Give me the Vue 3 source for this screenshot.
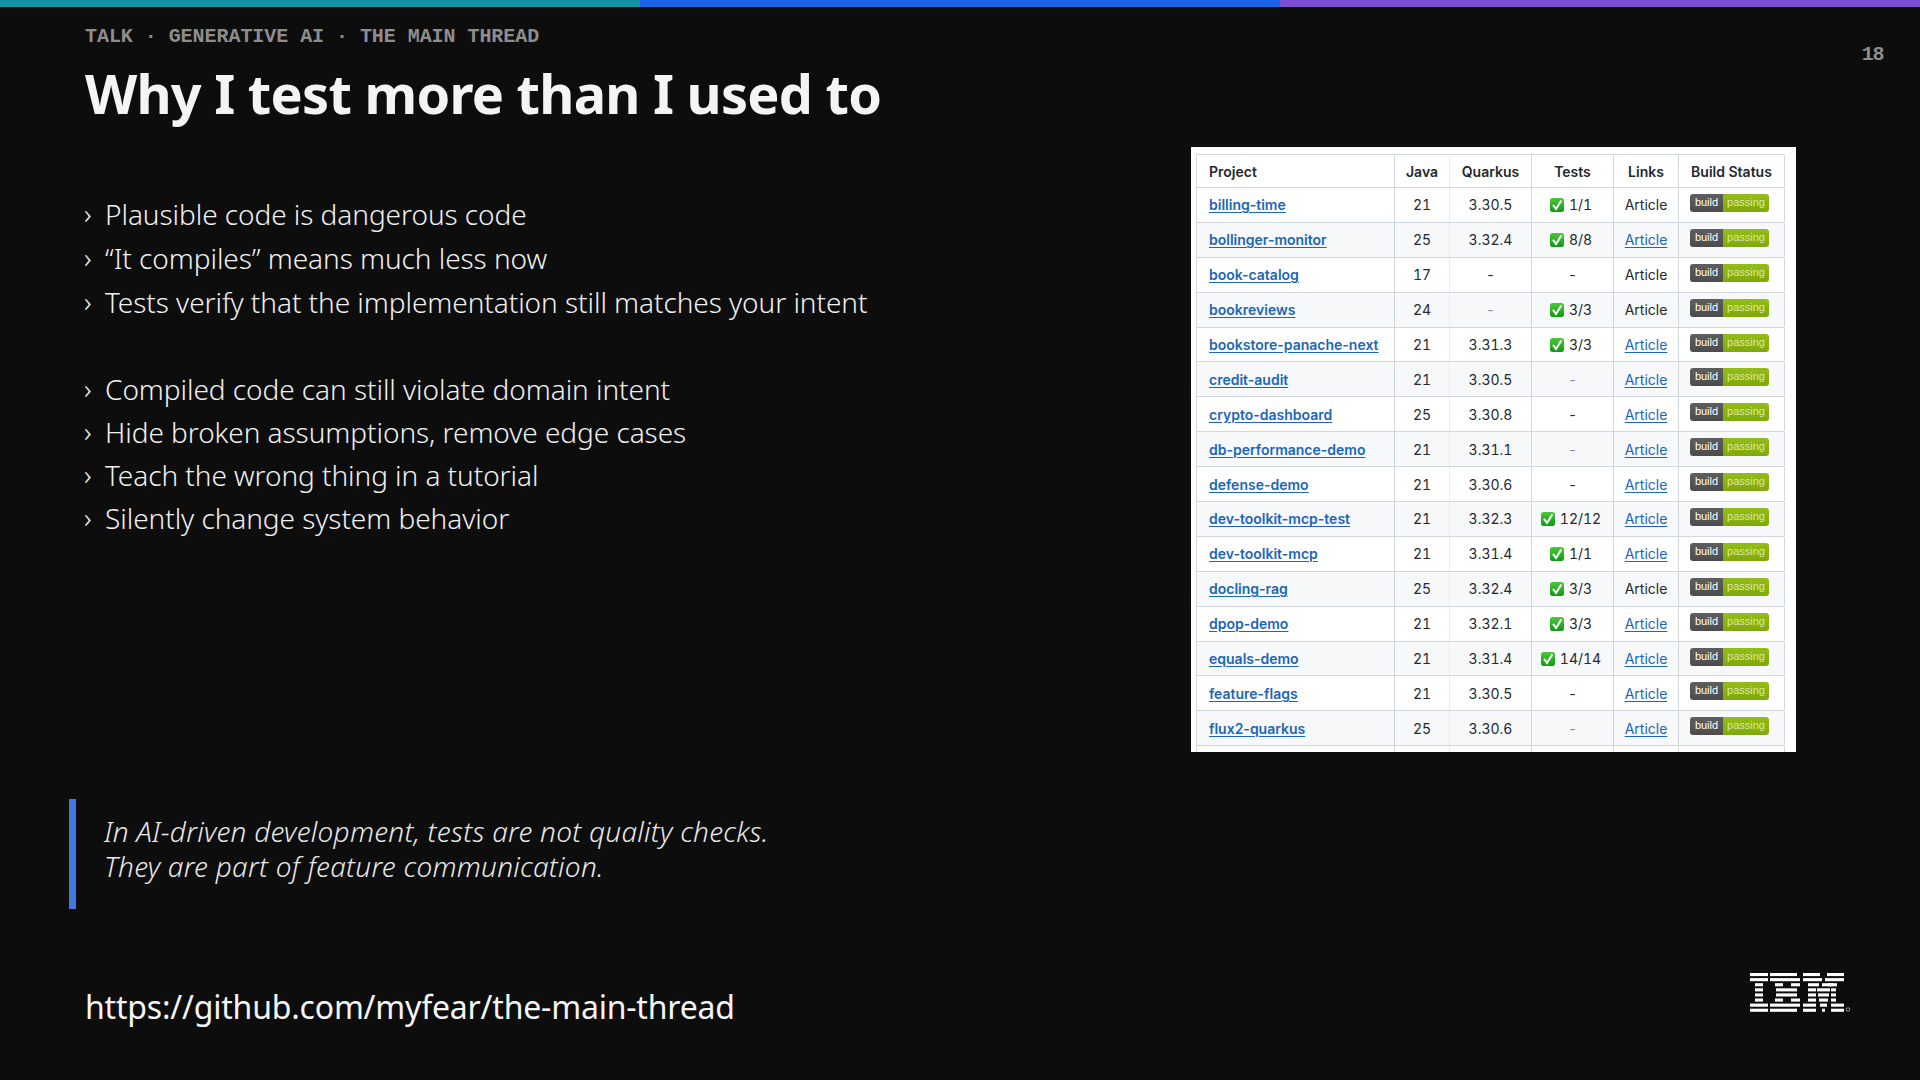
<script setup>
const rows = [
  ['billing-time', '21', '3.30.5', '1/1', false],
  ['bollinger-monitor', '25', '3.32.4', '8/8', true],
  ['book-catalog', '17', '-', '-', false],
  ['bookreviews', '24', '-', '3/3', false],
  ['bookstore-panache-next', '21', '3.31.3', '3/3', true],
  ['credit-audit', '21', '3.30.5', '-', true],
  ['crypto-dashboard', '25', '3.30.8', '-', true],
  ['db-performance-demo', '21', '3.31.1', '-', true],
  ['defense-demo', '21', '3.30.6', '-', true],
  ['dev-toolkit-mcp-test', '21', '3.32.3', '12/12', true],
  ['dev-toolkit-mcp', '21', '3.31.4', '1/1', true],
  ['docling-rag', '25', '3.32.4', '3/3', false],
  ['dpop-demo', '21', '3.32.1', '3/3', true],
  ['equals-demo', '21', '3.31.4', '14/14', true],
  ['feature-flags', '21', '3.30.5', '-', true],
  ['flux2-quarkus', '25', '3.30.6', '-', true]
]
const first = [
  'Plausible code is dangerous code',
  '“It compiles” means much less now',
  'Tests verify that the implementation still matches your intent'
]
const second = [
  'Compiled code can still violate domain intent',
  'Hide broken assumptions, remove edge cases',
  'Teach the wrong thing in a tutorial',
  'Silently change system behavior'
]
// IBM logo: each stripe is a list of [x, width] segments
const stripes = [
  [[0,18],[20,27],[53,17],[77,17]],
  [[0,18],[20,30],[53,19],[75,19]],
  [[5,8],[25,8],[41,9],[58,11],[72,11],[78,9]],
  [[5,8],[26,21],[58,8],[67,13],[81,5]],
  [[5,8],[26,21],[58,8],[68,11],[81,5]],
  [[5,8],[25,8],[41,9],[58,8],[69,9],[81,5]],
  [[0,18],[20,30],[53,13],[70,7],[81,13]],
  [[0,18],[20,27],[53,13],[72,3],[81,13]]
]
</script>

<template>
  <div class="slide">
    <div class="bar"><i class="teal"></i><i class="blue"></i><i class="violet"></i></div>
    <header class="head">
      <div>
        <div class="eyebrow">TALK · GENERATIVE AI · THE MAIN THREAD</div>
        <h1>Why I test more than I used to</h1>
      </div>
      <div class="page">18</div>
    </header>
    <main class="main">
      <div class="left">
        <ul class="list one">
          <li v-for="t in first" :key="t">{{ t }}</li>
        </ul>
        <ul class="list two">
          <li v-for="t in second" :key="t">{{ t }}</li>
        </ul>
      </div>
      <div class="card">
        <div class="tbl">
          <div class="row hd">
            <div class="c p">Project</div><div class="c j">Java</div><div class="c q">Quarkus</div>
            <div class="c t">Tests</div><div class="c l">Links</div><div class="c b">Build Status</div>
          </div>
          <div v-for="r in rows" :key="r[0]" class="row">
            <div class="c p"><a>{{ r[0] }}</a></div>
            <div class="c j num">{{ r[1] }}</div>
            <div class="c q num"><span :class="{ dash: r[2] === '-' }">{{ r[2] }}</span></div>
            <div class="c t num" :class="{ pass: r[3] !== '-' }">
              <svg v-if="r[3] !== '-'" class="check" viewBox="0 0 14 14">
                <defs>
                  <linearGradient id="g" x1="0" y1="0" x2="0" y2="1">
                    <stop offset="0" stop-color="#4cc83a"/><stop offset="1" stop-color="#0f9a12"/>
                  </linearGradient>
                </defs>
                <rect width="14" height="14" rx="2.8" fill="url(#g)"/>
                <path d="M3 6.8 6 11 11.4 2.4" fill="none" stroke="#fff" stroke-width="2"/>
              </svg>
              <span :class="{ dash: r[3] === '-' }">{{ r[3] }}</span>
            </div>
            <div class="c l"><a v-if="r[4]" class="plain">Article</a><template v-else>Article</template></div>
            <div class="c b"><span class="badge"><span class="bk">build</span><span class="bv">passing</span></span></div>
          </div>
          <div class="row"><div class="c p"></div><div class="c j"></div><div class="c q"></div><div class="c t"></div><div class="c l"></div><div class="c b"></div></div>
        </div>
      </div>
    </main>
    <blockquote class="quote">
      <p>In AI-driven development, tests are not quality checks.</p>
      <p>They are part of feature communication.</p>
    </blockquote>
    <footer class="foot">
      <div class="url">https://github.com/myfear/the-main-thread</div>
      <svg class="logo" viewBox="0 0 102 39" aria-label="IBM">
        <g v-for="(s, i) in stripes" :key="i">
          <rect v-for="(seg, j) in s" :key="j" :x="seg[0]" :y="i * 5.1" :width="seg[1]" height="3.1" fill="#fff"/>
        </g>
        <circle cx="98" cy="36.5" r="1.8" fill="none" stroke="#bbb" stroke-width=".8"/>
      </svg>
    </footer>
  </div>
</template>

<style scoped>
.slide {
  width: 1920px;
  height: 1080px;
  background: #0d0d0d;
  color: #f4f4f4;
  overflow: hidden;
  display: flex;
  flex-direction: column;
  font-family: "Noto Sans", sans-serif;
}
.bar { display: flex; height: 7px; flex: none; }
.bar i { flex: 1; }
.teal { background: #1192a4; }
.blue { background: #1c62e6; }
.violet { background: #7c4fd6; }
.head {
  display: flex;
  justify-content: space-between;
  padding: 18px 37px 0 85px;
  height: 140px;
  box-sizing: border-box;
  flex: none;
}
.eyebrow {
  font-family: "Liberation Mono", monospace;
  font-weight: 700;
  font-size: 20px;
  line-height: 24px;
  letter-spacing: -0.05px;
  color: #8d8d8d;
}
h1 {
  margin: 10px 0 0;
  font-size: 54px;
  line-height: 68px;
  font-weight: 700;
  letter-spacing: -0.73px;
  color: #f4f4f4;
}
.page {
  font-family: "Liberation Mono", monospace;
  font-weight: 700;
  font-size: 20px;
  line-height: 24px;
  letter-spacing: -1.4px;
  color: #8d8d8d;
  margin-top: 18px;
}
.main { display: flex; height: 605px; padding-left: 85px; flex: none; }
.left { width: 1106px; flex: none; padding-top: 45px; box-sizing: border-box; }
.list { list-style: none; margin: 0; padding: 0; font-size: 28px; font-weight: 300; letter-spacing: -0.06px; color: #f0f0f0; }
.list li { padding-left: 20px; position: relative; white-space: nowrap; }
.list li::before { content: "›"; position: absolute; left: -1px; top: -1px; }
.one li { line-height: 44px; }
.two { margin-top: 44px; }
.two li { line-height: 43px; }
.card {
  width: 605px;
  height: 605px;
  background: #fff;
  padding: 7px 12px 0 5px;
  box-sizing: border-box;
  overflow: hidden;
  flex: none;
  font-family: Inter, "Liberation Sans", sans-serif;
  color: #24292f;
  font-size: 14px;
}
.tbl { border-left: 1px solid #d0d7de; border-top: 1px solid #d0d7de; }
.row {
  display: grid;
  grid-template-columns: 198px 55px 82px 82px 65px 106px;
  height: 34.9px;
  box-sizing: border-box;
  border-bottom: 1px solid #d0d7de;
}
.row.hd { height: 33px; font-weight: 600; font-size: 14px; background: #fff; }
.row:nth-child(odd):not(.hd) { background: #f6f8fa; }
.row:nth-child(even) { background: #fff; }
.row:nth-child(odd) .dash { color: #8a8f96; }
.c {
  border-right: 1px solid #d0d7de;
  display: flex;
  align-items: center;
  justify-content: center;
  gap: 5px;
}
.num { font-variant-numeric: tabular-nums; }
.c.pass { padding-right: 3px; }
.c.p { justify-content: flex-start; padding-left: 12px; }
.c.j { border-right-color: #eaecef; }
.c a { color: #1b66b8; text-decoration: underline; text-underline-offset: 2px; }
.c.p a { font-weight: 600; }
.check { width: 14px; height: 14px; flex: none; }
.c.b { justify-content: flex-start; padding-left: 11px; align-items: flex-start; padding-top: 6px; }
.hd .c.b { padding-top: 0; align-items: center; justify-content: center; padding-left: 0; }
.badge { display: flex; width: 79px; height: 18px; border-radius: 3px; overflow: hidden; font-family: "Liberation Sans", sans-serif; font-size: 11px; line-height: 17px; color: #fff; }
.bk { width: 33px; background: linear-gradient(#5e5e5e, #4c4c4c); text-align: center; }
.bv { width: 46px; background: linear-gradient(#93bd16, #7fa80e); text-align: center; color: #dbe8a8; }
.quote {
  margin: 47px 0 0 69px;
  border-left: 7px solid #4178e0;
  height: 110px;
  box-sizing: border-box;
  padding: 15px 0 0 28px;
  font-style: italic;
  font-size: 28px;
  font-weight: 300;
  letter-spacing: 0.25px;
  line-height: 35px;
  color: #e8e8e8;
}
.quote p { margin: 0; white-space: nowrap; }
.foot {
  display: flex;
  align-items: center;
  justify-content: space-between;
  padding: 0 68px 0 85px;
  margin-top: 73px;
}
.url { font-size: 32px; line-height: 50px; letter-spacing: -0.2px; color: #f4f4f4; white-space: nowrap; }
.logo { width: 102px; height: 39px; margin-top: -30px; }
</style>
